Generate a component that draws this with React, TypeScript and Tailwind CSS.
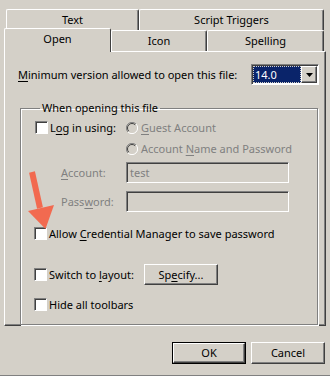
import React from "react";

const raised =
  "border border-t-white border-l-white border-r-[#404040] border-b-[#404040] shadow-[inset_-1px_-1px_0_#808080]";
const sunken =
  "border border-t-[#808080] border-l-[#808080] border-r-white border-b-white shadow-[inset_1px_1px_0_#404040]";

function U({ children }: { children: React.ReactNode }) {
  return <span className="underline underline-offset-[2px]">{children}</span>;
}

function Checkbox() {
  return <span className={`block w-[13px] h-[13px] shrink-0 bg-white ${sunken}`} />;
}

function Radio() {
  return (
    <svg width="12" height="12" viewBox="0 0 12 12" className="shrink-0">
      <circle cx="6" cy="6" r="5.5" fill="#d4d0c8" />
      <path d="M10 2 A5.5 5.5 0 0 0 2 10" fill="none" stroke="#808080" strokeWidth="1" />
      <path d="M9.2 2.8 A4.5 4.5 0 0 0 2.8 9.2" fill="none" stroke="#404040" strokeWidth="1" />
      <path d="M10 2 A5.5 5.5 0 0 1 2 10" fill="none" stroke="#ffffff" strokeWidth="1" />
    </svg>
  );
}

function Tab({ label, className }: { label: string; className: string }) {
  return (
    <div
      className={`flex items-center justify-center rounded-t-[2px] border-t border-l border-r border-t-white border-l-white border-r-[#404040] shadow-[inset_-1px_0_0_#808080] ${className}`}
    >
      {label}
    </div>
  );
}

export default function App() {
  return (
    <div
      className="relative w-[330px] h-[376px] bg-[#d4d0c8] border-b border-[#808080] text-[11px] leading-[14px] text-black overflow-hidden whitespace-nowrap"
      style={{ fontFamily: '"Noto Sans", "Liberation Sans", sans-serif' }}
    >
      <div className="pt-[9px] px-[4px]">
        <div className="flex h-[21px] px-[2px]">
          <Tab label="Text" className="w-[133px]" />
          <Tab label="Script Triggers" className="flex-1" />
        </div>
        <div className="flex h-[21px] items-end pr-[2px]">
          <Tab
            label="Open"
            className="relative z-10 w-[107px] h-[24px] -mb-[1px] pb-[3px] bg-[#d4d0c8] shadow-none"
          />
          <Tab label="Icon" className="w-[96px] h-full" />
          <Tab label="Spelling" className="flex-1 h-full" />
        </div>

        <div className="h-[275px] border border-t-white border-l-white border-r-[#404040] border-b-[#404040] shadow-[inset_-1px_-1px_0_#808080] pl-[13px] pr-[6px]">
          <div className="flex items-center h-[21px] mt-[12px]">
            <span>
              <U>M</U>inimum version allowed to open this file:
            </span>
            <div className={`ml-auto flex w-[68px] h-[21px] bg-white p-[1px] ${sunken}`}>
              <div className="flex-1 flex items-center bg-[#0a246a] text-white pl-[2px] outline outline-1 outline-dotted outline-[#d4d0c8] -outline-offset-1">
                14.0
              </div>
              <div className={`w-[16px] flex items-center justify-center bg-[#d4d0c8] ${raised}`}>
                <svg width="7" height="4" viewBox="0 0 7 4">
                  <path d="M0 0h7L3.5 4z" fill="#000" />
                </svg>
              </div>
            </div>
          </div>

          <fieldset className="mt-[16px] ml-[2px] mr-[1px] border border-[#808080] shadow-[inset_1px_1px_0_#fff,1px_1px_0_#fff] pl-[14px] pb-[9px]">
            <legend className="ml-[5px] px-[2px]">When opening this file</legend>

            <div className="flex items-center h-[21px] mt-[2px]">
              <div className="flex items-center w-[91px] gap-[2px]">
                <Checkbox />
                <span>
                  L<U>o</U>g in using:
                </span>
              </div>
              <div className="flex items-center gap-[3px] text-[#808080]">
                <Radio />
                <span>
                  <U>G</U>uest Account
                </span>
              </div>
            </div>
            <div className="flex items-center h-[21px] pl-[91px] gap-[3px] text-[#808080]">
              <Radio />
              <span>
                Account <U>N</U>ame and Password
              </span>
            </div>

            <div className="flex items-center h-[21px] mt-[3px] text-[#808080]">
              <span className="w-[91px] pl-[26px]">
                <U>A</U>ccount:
              </span>
              <div className={`w-[163px] h-[21px] flex items-center pl-[3px] ${sunken}`}>
                test
              </div>
            </div>
            <div className="flex items-center h-[21px] mt-[8px] text-[#808080]">
              <span className="w-[91px] pl-[26px]">
                Pass<U>w</U>ord:
              </span>
              <div className={`w-[163px] h-[21px] ${sunken}`} />
            </div>

            <div className="flex items-center h-[21px] mt-[11px] gap-[2px] -ml-[1px]">
              <Checkbox />
              <span>
                Allow <U>C</U>redential Manager to save password
              </span>
            </div>

            <div className="flex items-center h-[21px] mt-[20px] -ml-[1px]">
              <div className="flex items-center gap-[2px] w-[110px]">
                <Checkbox />
                <span>
                  Switch to <U>l</U>ayout:
                </span>
              </div>
              <div className={`w-[74px] h-[21px] flex items-center justify-center ${raised}`}>
                <span>
                  Sp<U>e</U>cify...
                </span>
              </div>
            </div>

            <div className="flex items-center h-[21px] mt-[9px] gap-[2px] -ml-[1px]">
              <Checkbox />
              <span>Hide all toolbars</span>
            </div>
          </fieldset>
        </div>
      </div>

      <div className="flex justify-end gap-[5px] pr-[5px] mt-[16px]">
        <div className="w-[74px] h-[22px] border border-black">
          <div className={`w-full h-full flex items-center justify-center ${raised}`}>OK</div>
        </div>
        <div className={`w-[74px] h-[22px] flex items-center justify-center ${raised}`}>
          Cancel
        </div>
      </div>

      <svg
        className="absolute left-0 top-0 pointer-events-none"
        width="330"
        height="376"
        viewBox="0 0 330 376"
      >
        <line x1="32" y1="172" x2="40" y2="208" stroke="#f26a50" strokeWidth="6" />
        <polygon points="28,211 54,205 45.5,229" fill="#f26a50" />
      </svg>
    </div>
  );
}
